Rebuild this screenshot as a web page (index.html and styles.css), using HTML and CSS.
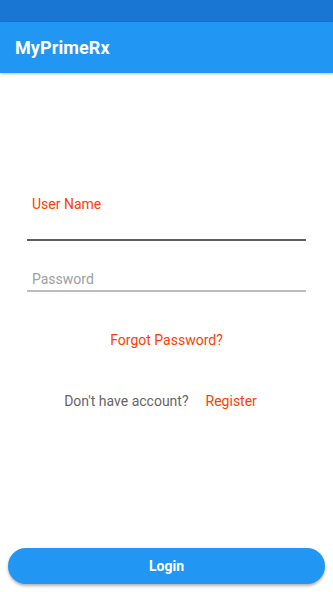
FILE: index.html
```html
<!DOCTYPE html>
<html>
<head>
<meta charset="utf-8">
<link rel="stylesheet" href="styles.css">
</head>
<body>
<div class="screen">
  <div class="status"></div>
  <header class="appbar"><span class="title">MyPrimeRx</span></header>
  <main class="content">
    <div class="field focused">
      <div class="label">User Name</div>
      <div class="line"></div>
    </div>
    <div class="field">
      <div class="placeholder">Password</div>
      <div class="line"></div>
    </div>
    <div class="forgot">Forgot Password?</div>
    <div class="register-row">
      <span class="muted">Don't have account?</span>
      <span class="link">Register</span>
    </div>
  </main>
  <div class="bottom">
    <button class="login">Login</button>
  </div>
</div>
</body>
</html>
```
FILE: styles.css
```css
html, body { margin: 0; padding: 0; }
body { font-family: Roboto, "Noto Sans", sans-serif; background: #fff; }
.screen { width: 333px; height: 592px; display: flex; flex-direction: column; overflow: hidden; }
.status { height: 22px; background: #1976D2; flex: none; }
.appbar { height: 51px; background: #2196F3; display: flex; align-items: center; padding-left: 15px; flex: none; box-shadow: 0 1px 3px rgba(0,0,0,0.25); position: relative; z-index: 1; }
.title { color: #fff; font-size: 18px; font-weight: 700; letter-spacing: 0.1px; }
.content { flex: 1; display: flex; flex-direction: column; padding: 0 27px; }
.field { display: flex; flex-direction: column; }
.field.focused { margin-top: 123px; }
.label { color: #FF3D00; font-size: 14px; line-height: 16px; padding-left: 5px; height: 16px; }
.field.focused .line { margin-top: 27px; height: 2px; background: #5f5f5f; }
.field + .field { margin-top: 30px; }
.placeholder { color: #9e9e9e; font-size: 14px; line-height: 16px; padding-left: 5px; }
.field .line { height: 1.5px; background: #bdbdbd; margin-top: 3px; }
.forgot { color: #FF3D00; font-size: 14px; line-height: 16px; text-align: center; margin-top: 40px; }
.register-row { display: flex; justify-content: center; gap: 17px; margin-top: 45px; padding-right: 12px; font-size: 14px; line-height: 16px; }
.muted { color: #666; }
.link { color: #FF3D00; }
.bottom { flex: none; padding: 0 8px 8px; }
.login { width: 100%; height: 36px; border: none; border-radius: 18px; background: #2196F3; color: #fff; font-family: Roboto, sans-serif; font-size: 14px; font-weight: 700; padding-top: 1px; box-shadow: 0 2px 3px rgba(0,0,0,0.3); }
```
